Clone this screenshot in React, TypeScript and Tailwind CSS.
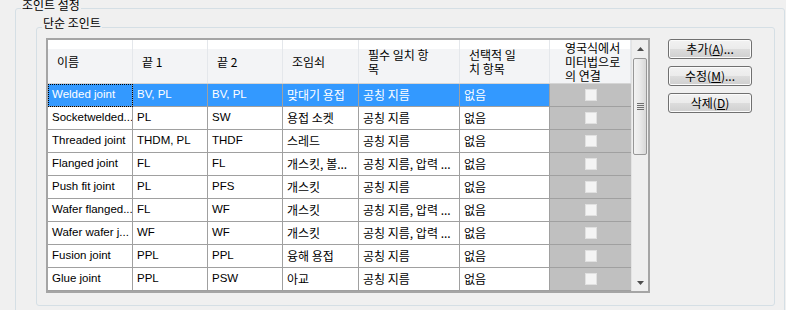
import React from 'react';

const KO = "text-[12px] font-['Noto_Sans_CJK_KR',sans-serif]";
const LA = "text-[11.5px] font-['Liberation_Sans','Noto_Sans_CJK_KR',sans-serif]";

const hasHangul = (s: string) => /[\uac00-\ud7a3]/.test(s);

const columns = [
  ['이름'],
  ['끝 1'],
  ['끝 2'],
  ['조임쇠'],
  ['필수 일치 항', '목'],
  ['선택적 일', '치 항목'],
  ['영국식에서', '미터법으로', '의 연결'],
];

const rows = [
  ['Welded joint', 'BV, PL', 'BV, PL', '맞대기 용접', '공칭 지름', '없음'],
  ['Socketwelded...', 'PL', 'SW', '용접 소켓', '공칭 지름', '없음'],
  ['Threaded joint', 'THDM, PL', 'THDF', '스레드', '공칭 지름', '없음'],
  ['Flanged joint', 'FL', 'FL', '개스킷, 볼...', '공칭 지름, 압력 ...', '없음'],
  ['Push fit joint', 'PL', 'PFS', '개스킷', '공칭 지름', '없음'],
  ['Wafer flanged...', 'FL', 'WF', '개스킷', '공칭 지름, 압력 ...', '없음'],
  ['Wafer wafer j...', 'WF', 'WF', '개스킷', '공칭 지름, 압력 ...', '없음'],
  ['Fusion joint', 'PPL', 'PPL', '융해 용접', '공칭 지름', '없음'],
  ['Glue joint', 'PPL', 'PSW', '아교', '공칭 지름', '없음'],
];

const grid = 'grid grid-cols-[85px_75px_75px_76px_101px_90px_81px]';

function Button({ label, hot, tail }: { label: string; hot: string; tail: string }) {
  return (
    <button className="h-[20px] w-[84px] rounded-[3px] border border-[#707070] bg-[linear-gradient(to_bottom,#f2f2f2_0%,#ebebeb_50%,#dddddd_50%,#cfcfcf_100%)] shadow-[inset_0_0_0_1px_#fbfbfb] flex items-center justify-center text-black">
      <span className={`${KO} leading-[14px]`}>
        {label}(<span className="underline underline-offset-1">{hot}</span>){tail}
      </span>
    </button>
  );
}

function Arrow({ down }: { down?: boolean }) {
  return (
    <div className="h-[17px] flex items-center justify-center">
      <svg width="7" height="4" viewBox="0 0 7 4">
        {down ? <path d="M0 0h7L3.5 4z" fill="#4d4d4d" /> : <path d="M0 4h7L3.5 0z" fill="#4d4d4d" />}
      </svg>
    </div>
  );
}

function Scrollbar() {
  return (
    <div className="w-[17px] flex flex-col bg-[#efefef] border-l border-[#e3e3e3]">
      <Arrow />
      <div className="mx-px mt-px h-[97px] rounded-[2px] border border-[#979797] bg-[linear-gradient(to_right,#f3f3f3_0%,#e9e9e9_50%,#d8d8d8_100%)] flex items-center justify-center">
        <div className="flex flex-col gap-px">
          <div className="w-[7px] h-px bg-[#6f6f6f]" />
          <div className="w-[7px] h-px bg-[#6f6f6f]" />
          <div className="w-[7px] h-px bg-[#6f6f6f]" />
          <div className="w-[7px] h-px bg-[#6f6f6f]" />
        </div>
      </div>
      <div className="flex-1" />
      <Arrow down />
    </div>
  );
}

function ListView() {
  return (
    <div className="w-[604px] border-2 border-[#a5a5a5] bg-white flex">
      <div className="w-[583px]">
        {/* header */}
        <div className={`${grid} h-[44px] border-b border-[#d5d5d5] bg-[linear-gradient(to_bottom,#ffffff_0%,#ffffff_22%,#f3f4f6_22%,#f3f4f6_100%)]`}>
          {columns.map((lines, i) => (
            <div
              key={i}
              className={`flex flex-col justify-center text-black border-r border-[#e4e7eb] ${KO} leading-[14px] ${i === 6 ? 'pl-[15px]' : 'pl-[9px]'}`}
            >
              {lines.map((l) => (
                <span key={l} className="whitespace-nowrap h-[14px]">{l}</span>
              ))}
            </div>
          ))}
        </div>

        {/* rows */}
        {rows.map((r, ri) => {
          const sel = ri === 0;
          return (
            <div key={ri} className={`${grid} h-[23px]`}>
              {r.map((c, ci) => (
                <div
                  key={ci}
                  className={`flex items-center pl-[4px] border-r border-b border-[#a0a0a0] overflow-hidden whitespace-nowrap ${
                    hasHangul(c) ? KO : LA
                  } ${sel ? 'bg-[#3399ff] text-white' : 'text-black'} ${
                    sel && ci === 0 ? 'outline-1 outline-dotted outline-black -outline-offset-1' : ''
                  }`}
                >
                  {c}
                </div>
              ))}
              <div className="flex items-center justify-center bg-[#c0c0c0] border-b border-[#a0a0a0]">
                <div className="w-[12px] h-[12px] bg-[#f4f4f4] border border-[#e0e0e0]" />
              </div>
            </div>
          );
        })}
      </div>
      <Scrollbar />
    </div>
  );
}

export default function App() {
  return (
    <div className={`w-[786px] h-[310px] overflow-hidden bg-[#f0f0f0] text-black ${KO}`}>
      {/* 조인트 설정 */}
      <div className="relative ml-[15px] mt-[8px] w-[770px] h-[330px] rounded-[3px] border border-[#d5dfe5]">
        <span className="absolute -top-[11px] left-[5px] px-px bg-[#f0f0f0] leading-[14px]">조인트 설정</span>

        {/* 단순 조인트 */}
        <div className="relative ml-[20px] mt-[18px] w-[739px] h-[279px] rounded-[3px] border border-[#d5dfe5]">
          <span className="absolute -top-[12px] left-[5px] px-px bg-[#f0f0f0] leading-[14px]">단순 조인트</span>

          <div className="flex pl-[9px] pt-[10px]">
            <ListView />
            <div className="ml-[18px] mt-px flex flex-col gap-[7px]">
              <Button label="추가" hot="A" tail="..." />
              <Button label="수정" hot="M" tail="..." />
              <Button label="삭제" hot="D" tail="" />
            </div>
          </div>
        </div>
      </div>
    </div>
  );
}
